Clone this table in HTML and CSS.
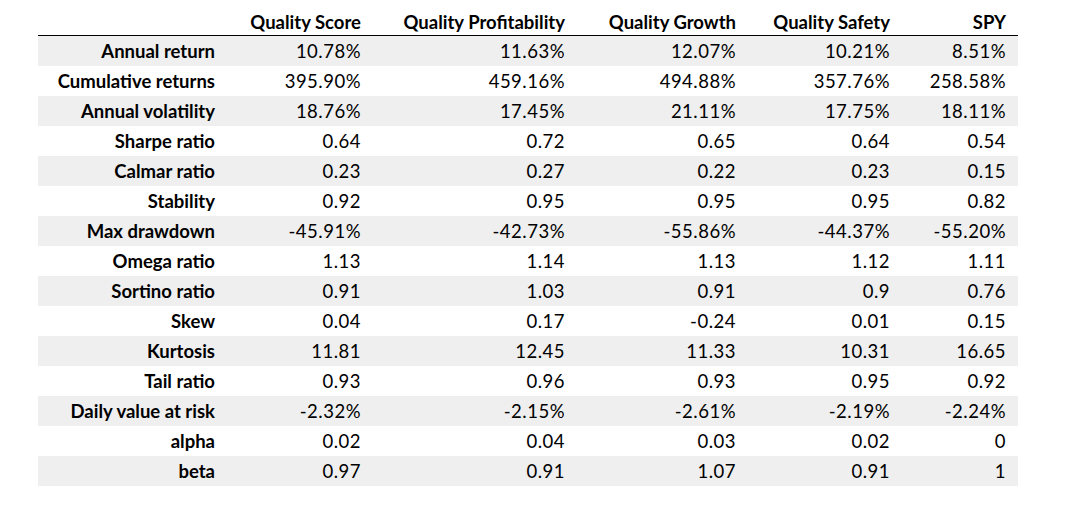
FILE: index.html
```html
<!DOCTYPE html>
<html>
<head>
<meta charset="utf-8">
<link rel="stylesheet" href="styles.css">
</head>
<body>
<table class="stats">
  <colgroup>
    <col class="c-idx"><col class="c1"><col class="c2"><col class="c3"><col class="c4"><col class="c5">
  </colgroup>
  <thead>
    <tr><th></th><th>Quality Score</th><th>Quality Profitability</th><th>Quality Growth</th><th>Quality Safety</th><th>SPY</th></tr>
  </thead>
  <tbody>
    <tr><th>Annual return</th><td>10.78%</td><td>11.63%</td><td>12.07%</td><td>10.21%</td><td>8.51%</td></tr>
    <tr><th>Cumulative returns</th><td>395.90%</td><td>459.16%</td><td>494.88%</td><td>357.76%</td><td>258.58%</td></tr>
    <tr><th>Annual volatility</th><td>18.76%</td><td>17.45%</td><td>21.11%</td><td>17.75%</td><td>18.11%</td></tr>
    <tr><th>Sharpe ratio</th><td>0.64</td><td>0.72</td><td>0.65</td><td>0.64</td><td>0.54</td></tr>
    <tr><th>Calmar ratio</th><td>0.23</td><td>0.27</td><td>0.22</td><td>0.23</td><td>0.15</td></tr>
    <tr><th>Stability</th><td>0.92</td><td>0.95</td><td>0.95</td><td>0.95</td><td>0.82</td></tr>
    <tr><th>Max drawdown</th><td>-45.91%</td><td>-42.73%</td><td>-55.86%</td><td>-44.37%</td><td>-55.20%</td></tr>
    <tr><th>Omega ratio</th><td>1.13</td><td>1.14</td><td>1.13</td><td>1.12</td><td>1.11</td></tr>
    <tr><th>Sortino ratio</th><td>0.91</td><td>1.03</td><td>0.91</td><td>0.9</td><td>0.76</td></tr>
    <tr><th>Skew</th><td>0.04</td><td>0.17</td><td>-0.24</td><td>0.01</td><td>0.15</td></tr>
    <tr><th>Kurtosis</th><td>11.81</td><td>12.45</td><td>11.33</td><td>10.31</td><td>16.65</td></tr>
    <tr><th>Tail ratio</th><td>0.93</td><td>0.96</td><td>0.93</td><td>0.95</td><td>0.92</td></tr>
    <tr><th>Daily value at risk</th><td>-2.32%</td><td>-2.15%</td><td>-2.61%</td><td>-2.19%</td><td>-2.24%</td></tr>
    <tr><th>alpha</th><td>0.02</td><td>0.04</td><td>0.03</td><td>0.02</td><td>0</td></tr>
    <tr><th>beta</th><td>0.97</td><td>0.91</td><td>1.07</td><td>0.91</td><td>1</td></tr>
  </tbody>
</table>
</body>
</html>
```
FILE: styles.css
```css
body {
  margin: 8px 8px 8px 38px;
  background: #fff;
  font-family: Lato, "Liberation Sans", sans-serif;
  font-size: 18.5px;
  color: #000;
}
.stats {
  border-collapse: collapse;
  table-layout: fixed;
  width: 980px;
}
.c-idx { width: 189px; }
.c1 { width: 146px; }
.c2 { width: 204px; }
.c3 { width: 171px; }
.c4 { width: 154px; }
.c5 { width: 116px; }
.stats th, .stats td {
  text-align: right;
  padding: 0 12px 0 0;
  white-space: nowrap;
}
.stats thead th {
  height: 27px;
  font-weight: bold;
  border-bottom: 1px solid #000;
  vertical-align: middle;
}
.stats tbody tr {
  height: 30px;
}
.stats tbody th {
  font-weight: bold;
}
.stats td {
  font-weight: normal;
  letter-spacing: 0.5px;
}
.stats tbody tr:nth-child(odd) {
  background: #efefef;
}
```
